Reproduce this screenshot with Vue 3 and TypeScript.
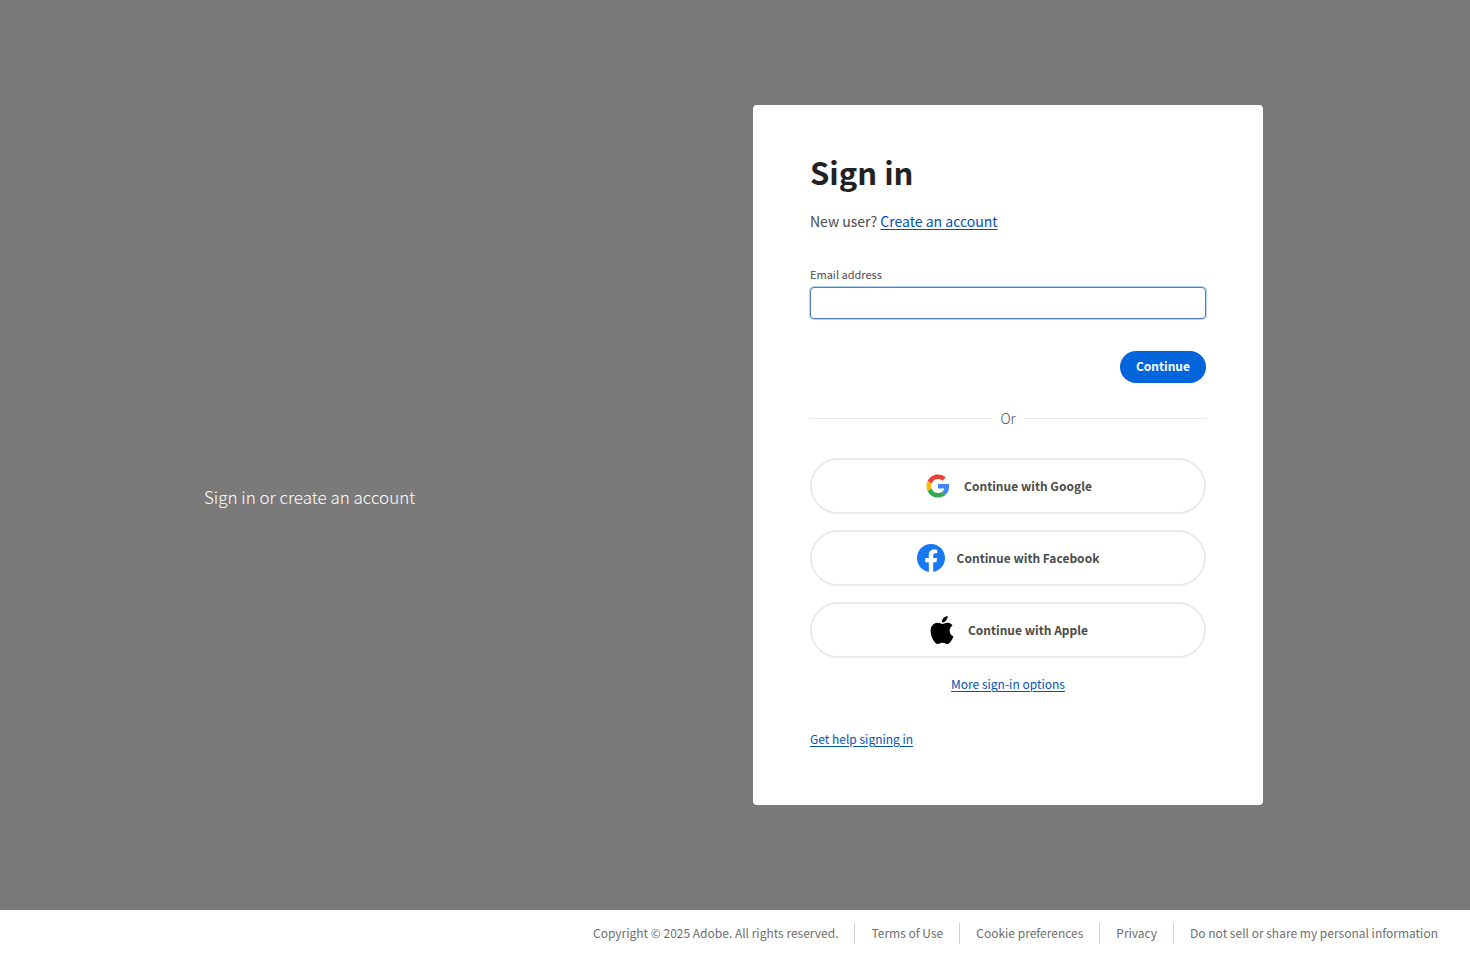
<script setup lang="ts">
import { onMounted, ref } from 'vue'

type Provider = { id: string; name: string }

const providers: Provider[] = [
  { id: 'google', name: 'Google' },
  { id: 'facebook', name: 'Facebook' },
  { id: 'apple', name: 'Apple' },
]

const legalLinks: string[] = [
  'Terms of Use',
  'Cookie preferences',
  'Privacy',
  'Do not sell or share my personal information',
]

const email = ref<string>('')
const emailField = ref<HTMLInputElement | null>(null)

onMounted(() => emailField.value?.focus())
</script>

<template>
  <div class="page">
    <main class="stage">
      <p class="tagline">Sign in or create an account</p>

      <section class="card">
        <h1 class="title">Sign in</h1>
        <p class="new-user">New user? <a href="#">Create an account</a></p>

        <form class="email-form" @submit.prevent>
          <label class="label" for="email">Email address</label>
          <input id="email" ref="emailField" v-model="email" class="field" type="email" autocomplete="username" />
          <button class="continue" type="submit">Continue</button>
        </form>

        <div class="divider"><span>Or</span></div>

        <div class="providers">
          <button v-for="p in providers" :key="p.id" class="provider" type="button">
            <svg v-if="p.id === 'google'" class="icon" viewBox="-5 -5 58 58" aria-hidden="true">
              <path fill="#EA4335" d="M24 9.5c3.54 0 6.71 1.22 9.21 3.6l6.85-6.85C35.9 2.38 30.47 0 24 0 14.62 0 6.51 5.38 2.56 13.22l7.98 6.19C12.43 13.72 17.74 9.5 24 9.5z" />
              <path fill="#4285F4" d="M46.98 24.55c0-1.57-.15-3.09-.38-4.55H24v9.02h12.94c-.58 2.96-2.26 5.48-4.78 7.18l7.73 6c4.51-4.18 7.09-10.36 7.09-17.65z" />
              <path fill="#FBBC05" d="M10.53 28.59c-.48-1.45-.76-2.99-.76-4.59s.27-3.14.76-4.59l-7.98-6.19C.92 16.46 0 20.12 0 24c0 3.88.92 7.54 2.56 10.78l7.97-6.19z" />
              <path fill="#34A853" d="M24 48c6.48 0 11.93-2.13 15.89-5.81l-7.73-6c-2.15 1.45-4.92 2.3-8.16 2.3-6.26 0-11.57-4.22-13.47-9.91l-7.98 6.19C6.51 42.62 14.62 48 24 48z" />
            </svg>
            <svg v-else-if="p.id === 'facebook'" class="icon" viewBox="0 0 24 24" aria-hidden="true">
              <path fill="#1877F2" d="M24 12.073c0-6.627-5.373-12-12-12s-12 5.373-12 12c0 5.99 4.388 10.954 10.125 11.854v-8.385H7.078v-3.47h3.047V9.43c0-3.007 1.792-4.669 4.533-4.669 1.312 0 2.686.235 2.686.235v2.953H15.83c-1.491 0-1.956.925-1.956 1.874v2.25h3.328l-.532 3.47h-2.796v8.385C19.612 23.027 24 18.062 24 12.073z" />
            </svg>
            <svg v-else class="icon" viewBox="0 0 24 24" aria-hidden="true">
              <path d="M12.152 6.896c-.948 0-2.415-1.078-3.96-1.04-2.04.027-3.91 1.183-4.961 3.014-2.117 3.675-.546 9.103 1.519 12.09 1.013 1.454 2.208 3.09 3.792 3.039 1.52-.065 2.09-.987 3.935-.987 1.831 0 2.35.987 3.96.948 1.637-.026 2.676-1.48 3.676-2.948 1.156-1.688 1.636-3.325 1.662-3.415-.039-.013-3.182-1.221-3.22-4.857-.026-3.04 2.48-4.494 2.597-4.559-1.429-2.09-3.623-2.324-4.39-2.376-2-.156-3.675 1.09-4.61 1.09zM15.53 3.83c.843-1.012 1.4-2.427 1.245-3.83-1.207.052-2.662.805-3.532 1.818-.78.896-1.454 2.338-1.273 3.714 1.338.104 2.715-.688 3.559-1.701" />
            </svg>
            <span>Continue with {{ p.name }}</span>
          </button>
        </div>

        <p class="more"><a href="#">More sign-in options</a></p>
        <p class="help"><a href="#">Get help signing in</a></p>
      </section>
    </main>

    <footer class="footer">
      <ul>
        <li>Copyright © 2025 Adobe. All rights reserved.</li>
        <li v-for="link in legalLinks" :key="link"><a href="#">{{ link }}</a></li>
      </ul>
    </footer>
  </div>
</template>

<style>
body {
  background: #fff;
}
</style>

<style scoped>
.page {
  display: flex;
  flex-direction: column;
  min-height: 100vh;
  font-family: "Noto Sans CJK SC", "Open Sans", sans-serif;
  font-size: 12px;
  line-height: 20px;
  color: #4b4b4b;
}

.page * {
  box-sizing: border-box;
}

p,
h1,
ul {
  margin: 0;
  padding: 0;
}

button,
input {
  font: inherit;
}

.stage {
  flex: 1;
  display: flex;
  align-items: center;
  justify-content: space-between;
  padding: 48px 207px 48px 204px;
  background: #7a7a7a;
}

.tagline {
  padding-top: 84px;
  font-size: 17px;
  line-height: 28px;
  font-weight: 300;
  color: #fff;
}

.card {
  width: 510px;
  padding: 45px 57px 56px;
  background: #fff;
  border-radius: 4px;
}

.card a {
  color: #0054b6;
  text-underline-offset: 2px;
}

.title {
  font-size: 31px;
  line-height: 44px;
  font-weight: 700;
  color: #222;
}

.new-user {
  margin-top: 15px;
  font-size: 14px;
  line-height: 24px;
}

.email-form {
  display: flex;
  flex-direction: column;
  margin-top: 31px;
}

.label {
  align-self: flex-start;
  font-size: 11px;
  line-height: 20px;
}

.field {
  width: 100%;
  height: 32px;
  margin-top: 3px;
  padding: 0 12px;
  border: 1px solid #5681b8;
  border-radius: 4px;
  outline: none;
  box-shadow: 0 0 0 1px #b5d3f5;
  caret-color: transparent;
}

.continue {
  align-self: flex-end;
  height: 32px;
  margin-top: 32px;
  padding: 0 16px 2px;
  border: 0;
  border-radius: 16px;
  background: #0265dc;
  color: #fff;
  font-weight: 700;
}

.divider {
  display: flex;
  align-items: center;
  gap: 8px;
  margin-top: 23px;
  font-size: 14px;
  line-height: 24px;
  font-weight: 300;
}

.divider::before,
.divider::after {
  content: "";
  flex: 1;
  height: 1px;
  background: #e8e8e8;
}

.providers {
  display: grid;
  gap: 16px;
  margin-top: 28px;
}

.provider {
  display: flex;
  align-items: center;
  justify-content: center;
  gap: 12px;
  height: 56px;
  border: 2px solid #eaeaea;
  border-radius: 28px;
  background: #fff;
  color: #4b4b4b;
  font-weight: 700;
}

.icon {
  width: 28px;
  height: 28px;
}

.more {
  margin-top: 16px;
  text-align: center;
}

.help {
  margin-top: 35px;
}

.footer {
  padding: 13px 32px 12px;
  color: #6e6e6e;
}

.footer ul {
  display: flex;
  justify-content: flex-end;
  list-style: none;
}

.footer li {
  padding-bottom: 2px;
  line-height: 19px;
}

.footer li + li {
  margin-left: 16px;
  padding-left: 16px;
  border-left: 1px solid #d0d0d0;
}

.footer a {
  color: inherit;
  text-decoration: none;
}
</style>
